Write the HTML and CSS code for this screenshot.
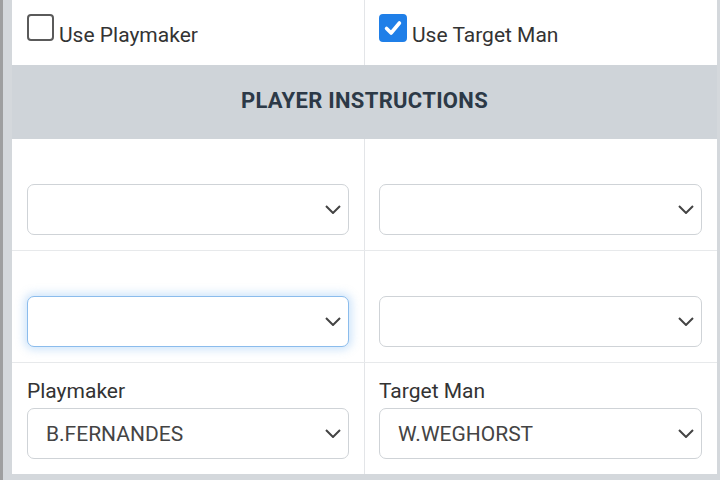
FILE: index.html
```html
<!DOCTYPE html>
<html>
<head>
<meta charset="utf-8">
<link rel="stylesheet" href="styles.css">
</head>
<body>
<div class="frame">
  <div class="panel">
    <div class="row row-check">
      <div class="cell check-cell">
        <span class="box"></span><span class="check-label">Use Playmaker</span>
      </div>
      <div class="cell check-cell">
        <span class="box checked"><svg viewBox="0 0 28 28" width="28" height="28"><path d="M6.5 14.5 L11.8 19.8 L21.5 8.2" fill="none" stroke="#fff" stroke-width="4.2" stroke-linecap="round" stroke-linejoin="round"/></svg></span><span class="check-label">Use Target Man</span>
      </div>
    </div>
    <div class="header">PLAYER INSTRUCTIONS</div>
    <div class="row">
      <div class="cell field">
        <div class="label"></div>
        <div class="select"><span class="value"></span><svg class="chev" viewBox="0 0 16 9" width="16" height="9"><path d="M1 1 L8 8 L15 1" fill="none" stroke="#444" stroke-width="2"/></svg></div>
      </div>
      <div class="cell field">
        <div class="label"></div>
        <div class="select"><span class="value"></span><svg class="chev" viewBox="0 0 16 9" width="16" height="9"><path d="M1 1 L8 8 L15 1" fill="none" stroke="#444" stroke-width="2"/></svg></div>
      </div>
    </div>
    <div class="row">
      <div class="cell field">
        <div class="label"></div>
        <div class="select focus"><span class="value"></span><svg class="chev" viewBox="0 0 16 9" width="16" height="9"><path d="M1 1 L8 8 L15 1" fill="none" stroke="#444" stroke-width="2"/></svg></div>
      </div>
      <div class="cell field">
        <div class="label"></div>
        <div class="select"><span class="value"></span><svg class="chev" viewBox="0 0 16 9" width="16" height="9"><path d="M1 1 L8 8 L15 1" fill="none" stroke="#444" stroke-width="2"/></svg></div>
      </div>
    </div>
    <div class="row last">
      <div class="cell field">
        <div class="label">Playmaker</div>
        <div class="select"><span class="value">B.FERNANDES</span><svg class="chev" viewBox="0 0 16 9" width="16" height="9"><path d="M1 1 L8 8 L15 1" fill="none" stroke="#444" stroke-width="2"/></svg></div>
      </div>
      <div class="cell field">
        <div class="label">Target Man</div>
        <div class="select"><span class="value">W.WEGHORST</span><svg class="chev" viewBox="0 0 16 9" width="16" height="9"><path d="M1 1 L8 8 L15 1" fill="none" stroke="#444" stroke-width="2"/></svg></div>
      </div>
    </div>
  </div>
</div>
</body>
</html>
```
FILE: styles.css
```css
html, body {
  margin: 0;
  padding: 0;
}
body {
  width: 720px;
  height: 480px;
  overflow: hidden;
  background: #d2d6da;
  font-family: Roboto, "Liberation Sans", sans-serif;
  color: #333;
}
.frame {
  border-left: 3px solid #9e9fa0;
  padding-left: 9px;
  padding-right: 3px;
  height: 480px;
  box-sizing: border-box;
  background: #d4d8dc;
}
.panel {
  width: 705px;
  background: #fff;
}
.row {
  display: grid;
  grid-template-columns: 352px 353px;
  border-bottom: 1px solid #e7e9eb;
}
.row.last {
  border-bottom: none;
}
.cell + .cell {
  border-left: 1px solid #e3e5e8;
}
.row-check {
  height: 65px;
  border-bottom: none;
}
.check-cell {
  display: flex;
  align-items: flex-start;
  padding: 14px 0 0 15px;
}
.row-check .cell + .cell {
  padding-left: 14px;
}
.box {
  width: 27px;
  height: 27px;
  box-sizing: border-box;
  border: 2px solid #5a5a5a;
  border-radius: 4px;
  display: flex;
  align-items: center;
  justify-content: center;
  flex: none;
}
.box.checked {
  background: #1f7fe8;
  border-color: #1f7fe8;
  width: 28px;
  height: 28px;
}
.check-label {
  font-size: 21px;
  line-height: 24px;
  margin-left: 5px;
  margin-top: 9px;
  color: #333;
}
.header {
  height: 74px;
  background: #cfd4d9;
  display: flex;
  align-items: center;
  justify-content: center;
  font-weight: bold;
  font-size: 22px;
  color: #2c3947;
  letter-spacing: 0.3px;
  padding-bottom: 4px;
  box-sizing: border-box;
}
.field {
  padding: 15px 15px 15px 15px;
}
.cell.field + .cell.field {
  padding-left: 14px;
  padding-right: 15px;
}
.label {
  height: 26px;
  line-height: 26px;
  font-size: 21px;
  margin-bottom: 4px;
  color: #333;
}
.select {
  height: 51px;
  box-sizing: border-box;
  border: 1px solid #cfd3d7;
  border-radius: 7px;
  display: flex;
  align-items: center;
  padding: 0 7px 0 18px;
  background: #fff;
}
.select.focus {
  border-color: #8bbcec;
  box-shadow: 0 0 8px 3px rgba(120, 180, 240, 0.35);
}
.value {
  flex: 1;
  font-size: 21px;
  color: #444;
}
.chev {
  flex: none;
}
```
